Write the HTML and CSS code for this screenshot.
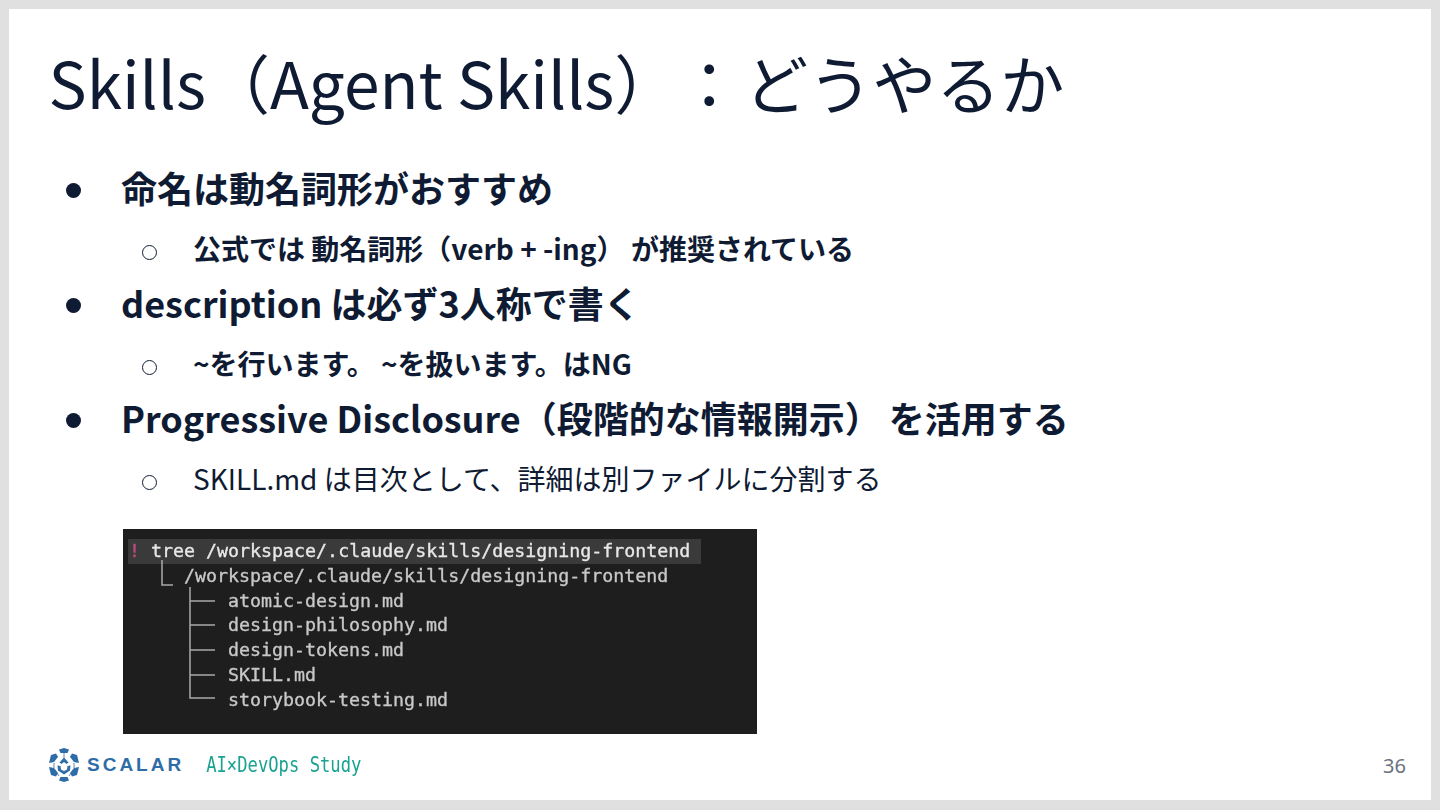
FILE: index.html
```html
<!DOCTYPE html>
<html lang="ja">
<head>
<meta charset="utf-8">
<title>Skills</title>
<link rel="stylesheet" href="styles.css">
</head>
<body>
<main class="slide">
  <h1 class="title">Skills（Agent Skills）<span class="colon">：</span>どうやるか</h1>
  <ul class="points">
    <li class="l1">命名は動名詞形がおすすめ</li>
    <li class="l2 bold">公式では 動名詞形（verb + -ing） が推奨されている</li>
    <li class="l1">description は必ず3人称で書く</li>
    <li class="l2 bold">~を行います。 ~を扱います。はNG</li>
    <li class="l1">Progressive Disclosure（段階的な情報開示） を活用する</li>
    <li class="l2">SKILL.md は目次として、詳細は別ファイルに分割する</li>
  </ul>
  <div class="terminal">
    <div class="term-line cmd"><span class="bang">!</span> tree /workspace/.claude/skills/designing-frontend</div>
    <div class="term-line root">/workspace/.claude/skills/designing-frontend</div>
    <div class="term-line file">atomic-design.md</div>
    <div class="term-line file">design-philosophy.md</div>
    <div class="term-line file">design-tokens.md</div>
    <div class="term-line file">SKILL.md</div>
    <div class="term-line file">storybook-testing.md</div>
    <svg class="tree" width="100" height="180" viewBox="0 0 100 180" fill="none" stroke="#a9a9a9" stroke-width="1.500">
      <path d="M39 31V56H50"/>
      <path d="M67 58V169H92M67 72H92M67 96H92M67 121H92M67 146H92"/>
    </svg>
  </div>
  <footer class="footer">
    <div class="brand">
      <svg class="logo" width="34" height="34" viewBox="0 0 34 34">
        <g fill="#2f6da8">
          <path d="M12 1.500l5-1.500 5 1.500-1.500 3.500h-7z"/>
          <path d="M12 32.500l5 1.500 5-1.500-1.500-3.500h-7z"/>
          <path d="M4 7l5-1.500 2 3.500-4 5-5 1z"/>
          <path d="M30 7l-5-1.500-2 3.500 4 5 5 1z"/>
          <path d="M4 27l5 1.500 2-3.500-4-5-5-1z"/>
          <path d="M30 27l-5 1.500-2-3.500 4-5 5-1z"/>
          <path d="M17 9.500l4.500 5-2 1.500-2.500-2-2.500 2-2-1.500z"/>
          <path d="M10.500 17.500l3 .5 .5 3.500 3 1.500 3-1.500 .5-3.500 3-.5-.5 5-6 4-6-4z"/>
        </g>
        <g stroke="#2f6da8" stroke-width="0.8" fill="none">
          <path d="M17 4v6M11 8l-1 1M23 8l1 1M7 15v5M27 15v5M10 25l2 3M24 25l-2 3"/>
        </g>
      </svg>
      <span class="scalar">SCALAR</span>
      <span class="study">AI×DevOps Study</span>
    </div>
    <span class="page">36</span>
  </footer>
</main>
</body>
</html>
```

FILE: styles.css
```css
* { box-sizing: border-box; }
html, body { margin: 0; padding: 0; }
body {
  width: 1440px;
  height: 810px;
  overflow: hidden;
  background: #e0e0e0;
  padding: 9px 9px 10px;
  font-family: "Noto Sans CJK JP", "Noto Sans", sans-serif;
  color: #0f1b33;
}
.slide {
  width: 1422px;
  height: 791px;
  background: #fff;
  padding: 0 25px 0 41px;
  display: flex;
  flex-direction: column;
}
.title {
  margin: 30px 0 0 -1.500px;
  font-size: 64px;
  font-weight: 400;
  line-height: 84px;
  white-space: nowrap;
}
.colon { margin: 0 3px 0 31px; }
.points {
  list-style: none;
  margin: 37px 0 0;
  padding: 0;
}
.l1, .l2 { position: relative; white-space: nowrap; }
.l1 {
  font-size: 36px;
  font-weight: 700;
  line-height: 54px;
  padding-left: 71px;
  margin-top: 6px;
}
.l1:first-child { margin-top: 0; }
.l1::before {
  content: "";
  position: absolute;
  left: 16px;
  top: 23px;
  width: 15px;
  height: 15px;
  border-radius: 50%;
  background: #0f1b33;
}
.l2 {
  font-size: 28px;
  font-weight: 400;
  line-height: 42px;
  padding-left: 143px;
  margin-top: 13px;
}
.l2.bold { font-weight: 700; }
.l2::before {
  content: "";
  position: absolute;
  left: 92px;
  top: 18px;
  width: 13px;
  height: 13px;
  border: 1.500px solid #0f1b33;
  border-radius: 50%;
}
.terminal {
  position: relative;
  width: 634px;
  height: 205px;
  margin: 30px 0 0 73px;
  background: #1e1e1e;
  padding-top: 10px;
  font-family: "DejaVu Sans Mono", monospace;
  font-size: 18.3px;
  line-height: 24.75px;
  color: #c8c8c8;
}
.term-line {
  height: 24.75px;
  white-space: pre;
  filter: blur(0.4px);
  -webkit-text-stroke: 0.35px currentColor;
}
.cmd { background: #3a3a3a; width: 573px; margin-left: 5px; padding-left: 1px; color: #e8e8e8; }
.bang { color: #c04a7e; }
.root { padding-left: 61px; }
.file { padding-left: 105px; }
.tree { position: absolute; left: 0; top: 0; }
.footer {
  display: flex;
  align-items: center;
  justify-content: space-between;
  height: 34px;
  margin-top: 14px;
}
.brand { display: flex; align-items: center; }
.logo { margin-left: -3px; }
.scalar {
  margin-left: 6px;
  font-family: "Liberation Sans", sans-serif;
  font-weight: 700;
  font-size: 19px;
  letter-spacing: 3px;
  color: #2f6da8;
}
.study {
  display: inline-block;
  margin-left: 22px;
  font-family: "DejaVu Sans Mono", monospace;
  font-size: 17.2px;
  color: #1aa392;
  transform: scaleY(1.2);
}
.page { font-family: "Noto Sans", sans-serif; font-size: 20px; color: #6b7280; }
```
